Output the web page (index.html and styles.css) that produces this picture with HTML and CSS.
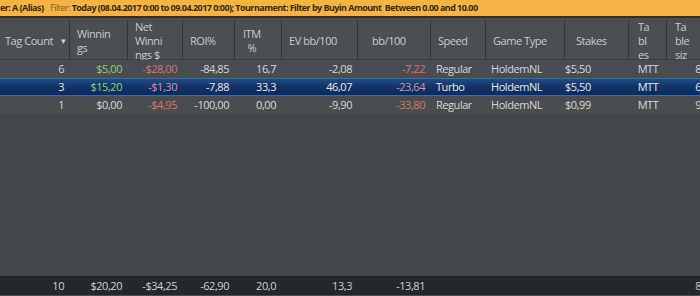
FILE: index.html
```html
<!DOCTYPE html>
<html>
<head>
<meta charset="utf-8">
<link rel="stylesheet" href="styles.css">
</head>
<body>
<div class="app">
  <div class="filterbar">
    <span class="fb-player">er: A (Alias)</span>
    <span class="fb-label">Filter:</span>
    <span class="fb-value">Today (08.04.2017 0:00 to 09.04.2017 0:00); Tournament: Filter by Buyin Amount&nbsp; Between 0.00 and 10.00</span>
  </div>
  <div class="grid header">
    <div class="hc hc-tag">Tag Count <span class="sort">&#9662;</span></div>
    <div class="hc">Winnin<br>gs</div>
    <div class="hc">Net<br>Winni<br>ngs $</div>
    <div class="hc">ROI%</div>
    <div class="hc hc-itm">ITM<br>%</div>
    <div class="hc">EV bb/100</div>
    <div class="hc hc-bb">bb/100</div>
    <div class="hc">Speed</div>
    <div class="hc">Game Type</div>
    <div class="hc hc-stakes">Stakes</div>
    <div class="hc hc-tables">Ta<br>bl<br>es</div>
    <div class="hc hc-size">Ta<br>ble<br>siz</div>
  </div>
  <div class="grid row">
    <div class="c num">6</div>
    <div class="c num pos">$5,00</div>
    <div class="c num neg">-$28,00</div>
    <div class="c num">-84,85</div>
    <div class="c num">16,7</div>
    <div class="c num">-2,08</div>
    <div class="c num neg">-7,22</div>
    <div class="c txt">Regular</div>
    <div class="c txt">HoldemNL</div>
    <div class="c stakes">$5,50</div>
    <div class="c mid">MTT</div>
    <div class="c num">8</div>
  </div>
  <div class="grid row selected">
    <div class="c num">3</div>
    <div class="c num pos">$15,20</div>
    <div class="c num neg">-$1,30</div>
    <div class="c num">-7,88</div>
    <div class="c num">33,3</div>
    <div class="c num">46,07</div>
    <div class="c num neg">-23,64</div>
    <div class="c txt">Turbo</div>
    <div class="c txt">HoldemNL</div>
    <div class="c stakes">$5,50</div>
    <div class="c mid">MTT</div>
    <div class="c num">6</div>
  </div>
  <div class="grid row">
    <div class="c num">1</div>
    <div class="c num">$0,00</div>
    <div class="c num neg">-$4,95</div>
    <div class="c num">-100,00</div>
    <div class="c num">0,00</div>
    <div class="c num">-9,90</div>
    <div class="c num neg">-33,80</div>
    <div class="c txt">Regular</div>
    <div class="c txt">HoldemNL</div>
    <div class="c stakes">$0,99</div>
    <div class="c mid">MTT</div>
    <div class="c num">9</div>
  </div>
  <div class="spacer"></div>
  <div class="grid footer">
    <div class="c num">10</div>
    <div class="c num">$20,20</div>
    <div class="c num">-$34,25</div>
    <div class="c num">-62,90</div>
    <div class="c num">20,0</div>
    <div class="c num">13,3</div>
    <div class="c num">-13,81</div>
    <div class="c"></div>
    <div class="c"></div>
    <div class="c"></div>
    <div class="c"></div>
    <div class="c num">8</div>
  </div>
</div>
</body>
</html>
```
FILE: styles.css
```css
html, body {
  margin: 0;
  padding: 0;
  background: #45484b;
}
.app {
  width: 700px;
  height: 296px;
  overflow: hidden;
  display: flex;
  flex-direction: column;
  font-family: "Open Sans", "Noto Sans", sans-serif;
  font-size: 11px;
  letter-spacing: -0.45px;
  color: #d6d6d6;
  background: #45484b;
}
.filterbar {
  height: 16px;
  line-height: 16px;
  background: #f5b345;
  border-bottom: 2px solid #2e3032;
  white-space: nowrap;
  overflow: hidden;
  font-size: 9px;
  letter-spacing: -0.55px;
  color: #3a2a12;
}
.fb-player { font-weight: 700; margin-right: 5px; }
.fb-label { color: #8a5a20; }
.fb-value { font-weight: 700; }
.grid {
  display: grid;
  grid-template-columns: 70px 58px 55px 52px 47px 76px 73px 55px 79px 64px 38px 40px;
  width: 707px;
}
.header {
  height: 41px;
  background: #4b4e52;
  border-bottom: 1px solid #3e4144;
}
.hc {
  display: flex;
  align-items: center;
  padding-left: 7px;
  line-height: 14px;
  color: #c9cacb;
  border-right: 1px solid #35383b;
  margin: 2px 0;
  white-space: nowrap;
}
.hc-tag { padding-left: 5px; }
.sort { font-size: 9px; margin-left: 8px; color: #d0d0d0; }
.hc-itm { padding-left: 8px; text-align: center; }
.hc-bb { padding-left: 14px; }
.hc-stakes { padding-left: 11px; }
.hc-tables { padding-left: 9px; }
.hc-size { padding-left: 8px; }
.row {
  height: 18px;
  line-height: 18px;
  background: #4a4d50;
}
.row.selected {
  background: linear-gradient(#1f4c86, #113268 50%, #0e2b5c);
  border-top: 1px solid #3d6aa3;
  border-bottom: 1px solid #3d6aa3;
  height: 16px;
  line-height: 16px;
  color: #e8e8e8;
}
.c {
  white-space: nowrap;
  overflow: hidden;
}
.num { text-align: right; padding-right: 6px; }
.txt { padding-left: 5px; }
.stakes { padding-left: 0; }
.mid { text-align: center; }
.pos { color: #8ccf78; }
.neg { color: #d8736d; }
.selected .neg { color: #d891a8; }
.selected .pos { color: #89d27a; }
.spacer { flex: 1; }
.footer {
  height: 18px;
  line-height: 17px;
  background: #25282a;
  border-top: 1px solid #1c1e20;
  border-bottom: 1px solid #4a4d50;
  color: #cfd0d0;
}
```
